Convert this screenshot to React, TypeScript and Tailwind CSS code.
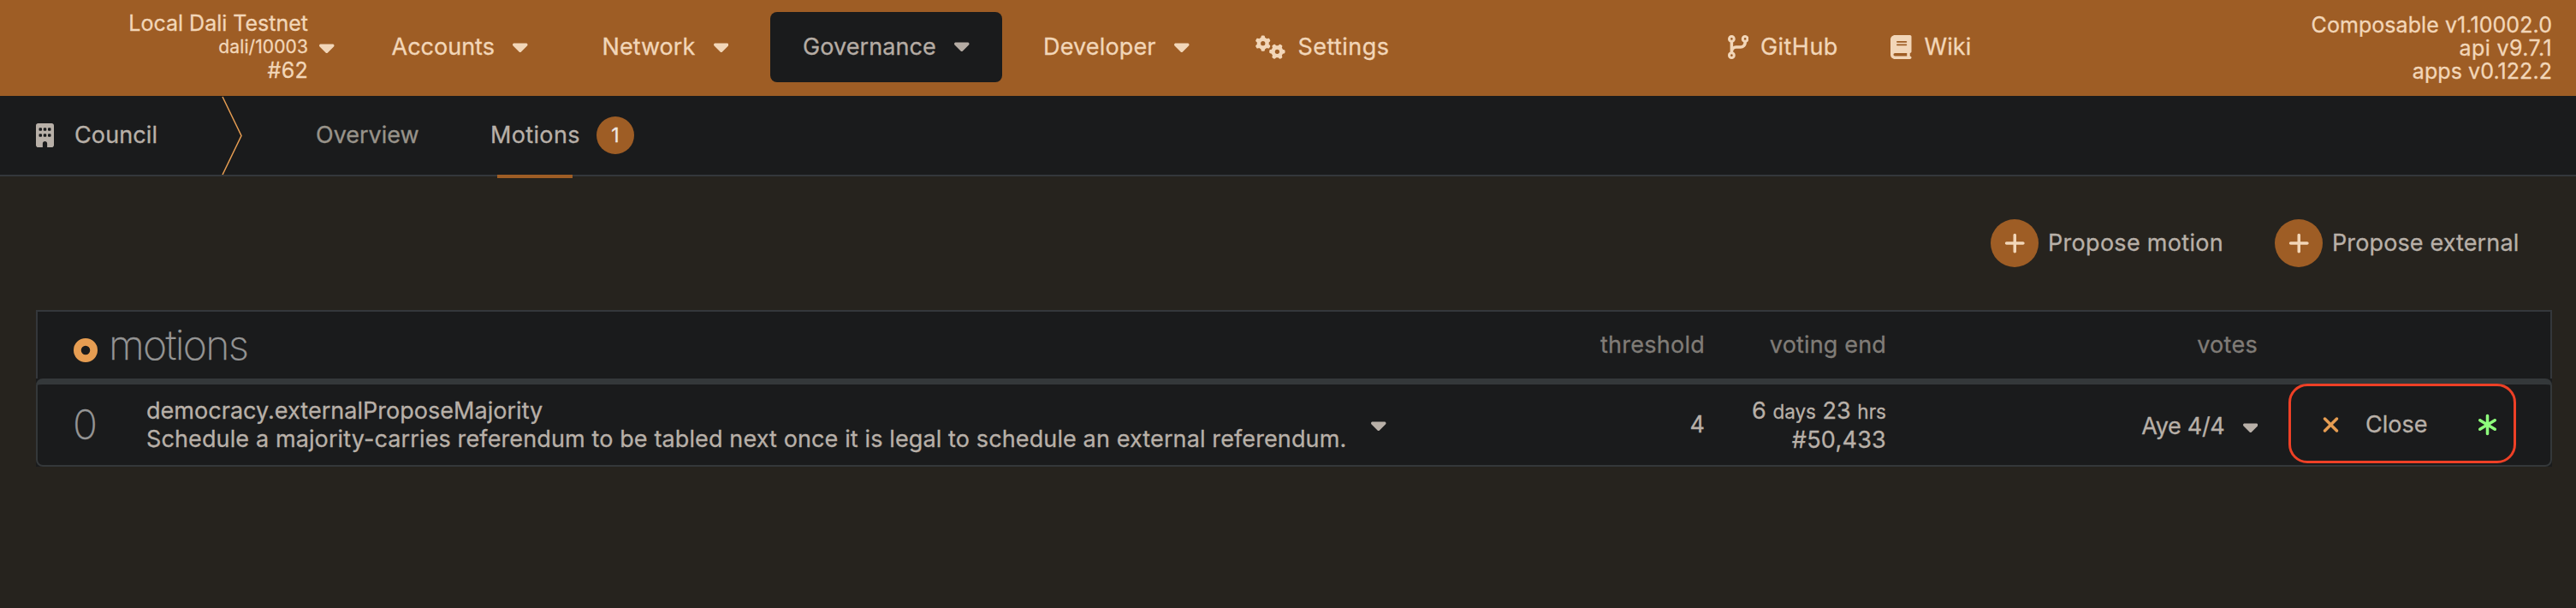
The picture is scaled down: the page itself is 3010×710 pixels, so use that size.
import type { ReactNode } from "react";
import {
  FaAsterisk,
  FaBook,
  FaBuilding,
  FaCaretDown,
  FaCircleDot,
  FaCodeBranch,
  FaGears,
  FaPlus,
  FaXmark,
} from "react-icons/fa6";

function Caret({ className = "" }: { className?: string }) {
  return <FaCaretDown className={`h-7 w-[17.5px] shrink-0 ${className}`} />;
}

function MenuItem({ label, className, labelClass }: { label: string; className: string; labelClass: string }) {
  return (
    <div className={`flex shrink-0 items-center ${className}`}>
      <span className={labelClass}>{label}</span>
      <Caret className="mb-[3px]" />
    </div>
  );
}

function Header() {
  return (
    <header className="flex h-28 items-center bg-[#9e5d25] pb-0.5 text-[#f2d6b8]">
      <div className="w-[360px] shrink-0 text-right text-[25px] leading-[27.5px]">
        <div>Local Dali Testnet</div>
        <div className="text-[21px] tracking-[0.1px]">dali/10003</div>
        <div className="tracking-[0.3px]">#62</div>
      </div>
      <Caret className="ml-[13px]" />
      <MenuItem label="Accounts" className="ml-[67px]" labelClass="w-[141.5px]" />
      <MenuItem label="Network" className="ml-[87px]" labelClass="w-[130px] tracking-[0.05px]" />
      <MenuItem
        label="Governance"
        className="mb-px ml-[49px] h-[82px] w-[271px] rounded-lg bg-[#1a1b1c] pl-[38px] text-[#b5aca4]"
        labelClass="w-[177px] tracking-[0.08px]"
      />
      <MenuItem label="Developer" className="ml-12" labelClass="w-[153px] tracking-[0.16px]" />
      <FaGears className="ml-[77px] h-7 w-[35px] shrink-0" />
      <span className="ml-[15px] w-[107px] shrink-0 tracking-[0.45px]">Settings</span>
      <FaCodeBranch className="ml-[395px] h-7 w-[24.5px] shrink-0" />
      <span className="ml-3.5 w-[91px] shrink-0 tracking-[0.45px]">GitHub</span>
      <FaBook className="ml-[61px] h-7 w-[24.5px] shrink-0" />
      <span className="ml-[15px] shrink-0 tracking-[0.11px]">Wiki</span>
      <div className="mt-0.5 mr-7 ml-auto text-right text-[25px] leading-[27px] tracking-[0.07px]">
        <div>Composable v1.10002.0</div>
        <div className="tracking-[0.4px]">api v9.7.1</div>
        <div>apps v0.122.2</div>
      </div>
    </header>
  );
}

function Tabs() {
  return (
    <nav className="flex h-[94px] items-center border-b-2 border-[#34373b] bg-[#1a1b1c] text-[#b8b0a8]">
      <FaBuilding className="ml-[42px] h-7 w-[21px] shrink-0" />
      <span className="ml-6 w-[172px] shrink-0 tracking-[0.12px]">Council</span>
      <svg className="h-[92px] w-6 shrink-0" viewBox="0 0 24 92" fill="none">
        <path d="M1 1 L23 46.5 L1 92" stroke="#e69d52" strokeWidth="1.5" />
      </svg>
      <span className="ml-[86px] w-[204px] shrink-0 text-[#98938a]">Overview</span>
      <div className="relative flex h-[92px] items-center">
        <span className="w-[124px] tracking-[0.35px]">Motions</span>
        <span className="flex size-11 items-center justify-center rounded-full bg-[#9e5d25] text-[23px] text-[#eee8e2]">
          1
        </span>
        <div className="absolute top-[92px] left-2 h-1 w-[87.5px] bg-[#9e5d25]" />
      </div>
    </nav>
  );
}

function ProposeButton({ label, className }: { label: string; className: string }) {
  return (
    <button className={`flex items-center gap-[11px] whitespace-nowrap ${className}`}>
      <span className="flex size-14 shrink-0 items-center justify-center rounded-full bg-[#9e5d25] text-[#f2d6b8]">
        <FaPlus className="h-7 w-[24.5px]" />
      </span>
      {label}
    </button>
  );
}

function Unit({ children }: { children: ReactNode }) {
  return <span className="text-[22.5px]">{children}</span>;
}

const columns = "grid grid-cols-[1616px_332px_212px_434px_1fr] items-center";

function MotionsTable() {
  return (
    <section className="mt-[50px] ml-[42px] w-[2940px] bg-[#1a1b1c]">
      <div
        className={`${columns} h-20 border-x-2 border-t-2 border-[#34373b] text-right text-[#807c77]`}
      >
        <div className="flex items-center pl-[42px]">
          <FaCircleDot className="mt-3 size-7 text-[#e69d52]" />
          <h1 className="ml-[13px] text-[48px] leading-[60px] font-extralight tracking-[-1.7px] text-[#959595]">
            motions
          </h1>
        </div>
        <div className="tracking-[0.25px]">threshold</div>
        <div className="tracking-[0.16px]">voting end</div>
        <div className="tracking-[0.28px]">votes</div>
      </div>
      <div
        className={`${columns} h-[103px] rounded-lg border-x-2 border-t-[7px] border-b-2 border-[#34383a] text-right text-[#b8b0a8]`}
      >
        <div className="flex items-center pl-[41px] text-left">
          <span className="w-[86px] text-[48px] leading-[60px] font-extralight text-[#959595]">0</span>
          <div className="w-[1431px] leading-[33px] whitespace-nowrap">
            <div className="tracking-[0.03px]">democracy.externalProposeMajority</div>
            <div className="tracking-[0.119px]">
              Schedule a majority-carries referendum to be tabled next once it is legal to schedule an external
              referendum.
            </div>
          </div>
          <Caret />
        </div>
        <div>4</div>
        <div className="leading-[33px]">
          <div>
            6 <Unit>days</Unit> 23 <Unit>hrs</Unit>
          </div>
          <div className="tracking-[0.25px]">#50,433</div>
        </div>
        <div className="flex items-center justify-end pt-[3px]">
          <span className="mr-[21px] tracking-[-0.3px]">Aye 4/4</span>
          <Caret />
        </div>
        <div className="relative flex h-[94px] items-center">
          <FaXmark className="ml-[75px] h-7 w-[21px] text-[#e69d52]" />
          <span className="ml-[30px] w-[132px] text-left">Close</span>
          <FaAsterisk className="h-7 w-[21px] text-[#8eff7c]" />
          <div className="absolute -top-px left-9 h-[93px] w-[266px] rounded-[22px] border-3 border-[#ee4026]" />
        </div>
      </div>
    </section>
  );
}

export default function App() {
  return (
    <div className="h-[710px] w-[3010px] overflow-hidden bg-[#26231e] font-['Inter','Liberation_Sans',sans-serif] text-[27px] leading-10 [-webkit-text-stroke:0.3px]">
      <Header />
      <Tabs />
      <div className="flex justify-end pt-[50px] pr-[66px] text-[#b8b0a8]">
        <ProposeButton label="Propose motion" className="w-[332px] tracking-[0.3px]" />
        <ProposeButton label="Propose external" className="w-[286px] tracking-[0.12px]" />
      </div>
      <MotionsTable />
    </div>
  );
}
